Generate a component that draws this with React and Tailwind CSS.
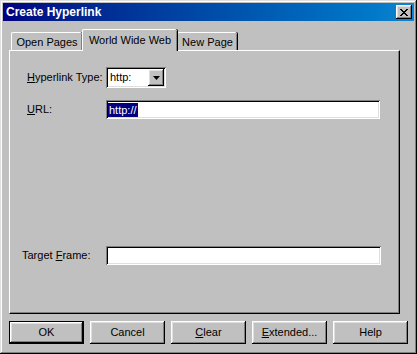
const raised =
  "shadow-[inset_-1px_-1px_#000,inset_1px_1px_#fff,inset_-2px_-2px_#808080,inset_2px_2px_#dfdfdf]";
const sunken =
  "shadow-[inset_1px_1px_#808080,inset_-1px_-1px_#fff,inset_2px_2px_#000,inset_-2px_-2px_#dfdfdf]";

function Button({ children, isDefault }) {
  return (
    <div
      className={
        "w-[75px] h-[23px] flex items-center justify-center bg-[#c0c0c0] " +
        (isDefault ? "border border-black " : "") +
        raised
      }
    >
      {children}
    </div>
  );
}

function Tab({ children, active, width }) {
  if (active) {
    return (
      <div
        className={
          "relative z-10 h-[22px] -mb-[1px] pt-[2px] border-l border-t border-white rounded-tl-[2px] rounded-tr-[2px] bg-[#c0c0c0] shadow-[inset_-1px_0_#808080,1px_0_#000] flex justify-center items-start " +
          width
        }
      >
        <span className="leading-[16px]">{children}</span>
      </div>
    );
  }
  return (
    <div
      className={
        "h-[18px] border-l border-t border-white rounded-tl-[2px] rounded-tr-[2px] bg-[#c0c0c0] shadow-[inset_-1px_0_#808080,1px_0_#000] flex justify-center items-center " +
        width
      }
    >
      <span className="leading-[16px] pt-[1px]">{children}</span>
    </div>
  );
}

export default function App() {
  return (
    <div
      className="w-[417px] h-[354px] bg-[#c0c0c0] p-[3px] text-[11px] text-black shadow-[inset_-1px_-1px_#000,inset_1px_1px_#dfdfdf,inset_-2px_-2px_#808080,inset_2px_2px_#fff] select-none"
      style={{ fontFamily: '"Liberation Sans", Arial, sans-serif' }}
    >
      {/* title bar */}
      <div className="h-[18px] bg-gradient-to-r from-[#000080] to-[#1084d0] flex items-center justify-between pl-[3px] pr-[2px]">
        <span className="text-white font-bold text-[12px] leading-none">
          Create Hyperlink
        </span>
        <div className={"w-[16px] h-[14px] bg-[#c0c0c0] flex items-center justify-center " + raised}>
          <svg width="8" height="7" viewBox="0 0 8 7">
            <path d="M0 0h2v1h1v1h2v-1h1v-1h2v1h-1v1h-1v1h-1v1h1v1h1v1h1v1h-2v-1h-1v-1h-2v1h-1v1h-2v-1h1v-1h1v-1h1v-1h-1v-1h-1v-1h-1z" fill="#000" />
          </svg>
        </div>
      </div>

      {/* tabs */}
      <div className="mt-[8px] ml-[8px] h-[21px] flex items-end">
        <Tab width="w-[71px]">Open Pages</Tab>
        <Tab active width="w-[95px]">World Wide Web</Tab>
        <Tab width="w-[60px]">New Page</Tab>
      </div>

      {/* panel */}
      <div className="ml-[6px] w-[391px] h-[264px] border-l border-t border-white border-r border-b border-r-black border-b-black shadow-[inset_-1px_-1px_#808080]">
        <div className="mt-[16px] ml-[17px] flex items-center h-[21px]">
          <span className="w-[79px]">
            <u>H</u>yperlink Type:
          </span>
          <div className={"w-[60px] h-[21px] bg-white flex items-center p-[2px] " + sunken}>
            <span className="flex-1 pl-[2px]">http:</span>
            <div className={"w-[16px] h-[17px] bg-[#c0c0c0] flex items-center justify-center " + raised}>
              <svg width="7" height="4" viewBox="0 0 7 4">
                <path d="M0 0h7L3.5 4z" fill="#000" />
              </svg>
            </div>
          </div>
        </div>

        <div className="mt-[12px] ml-[17px] flex items-center h-[19px]">
          <span className="w-[79px]">
            <u>U</u>RL:
          </span>
          <div className={"w-[274px] h-[19px] bg-white flex items-center px-[2px] " + sunken}>
            <span className="bg-[#000080] text-white px-[1px] leading-[14px]">http://</span>
          </div>
        </div>

        <div className="mt-[127px] ml-[12px] flex items-center h-[19px]">
          <span className="w-[84px]">
            Target <u>F</u>rame:
          </span>
          <div className={"w-[275px] h-[19px] bg-white " + sunken}></div>
        </div>
      </div>

      {/* buttons */}
      <div className="mt-[7px] ml-[6px] flex gap-[6px]">
        <Button isDefault>OK</Button>
        <Button>Cancel</Button>
        <Button>
          <span>
            <u>C</u>lear
          </span>
        </Button>
        <Button>
          <span>
            <u>E</u>xtended...
          </span>
        </Button>
        <Button>Help</Button>
      </div>
    </div>
  );
}
